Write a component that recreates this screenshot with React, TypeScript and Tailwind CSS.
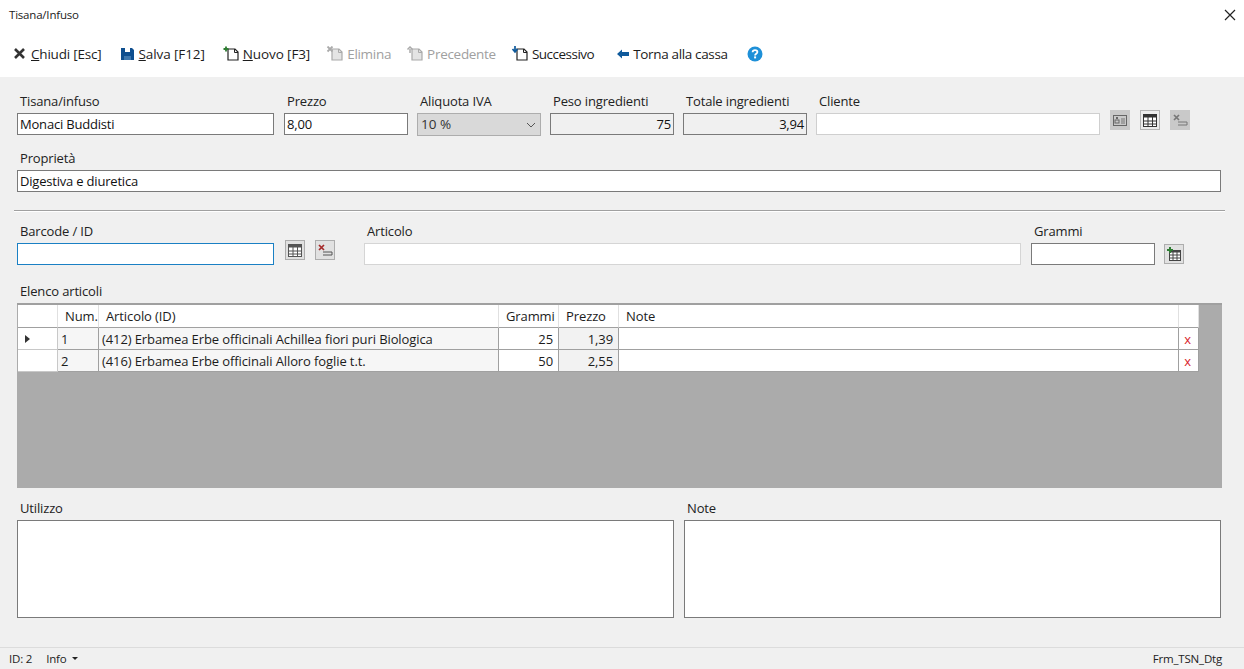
const font = "font-['Open_Sans','Liberation_Sans',sans-serif]"

// toolbar icons
function IconClose() {
  return (
    <svg width="16" height="16" viewBox="0 0 16 16" className="shrink-0">
      <path d="M3 3l9 9M12 3l-9 9" stroke="#333" strokeWidth="2.6" fill="none" />
    </svg>
  )
}

function IconSave() {
  return (
    <svg width="16" height="16" viewBox="0 0 16 16" className="shrink-0">
      <path d="M1 2h11l2 2v10H1z" fill="#0f4f8f" />
      <rect x="5" y="2" width="5" height="4" fill="#fff" />
      <rect x="4" y="10" width="7" height="4" fill="#3f78ae" />
    </svg>
  )
}

function IconDoc({ mark, color, dim }: { mark: "plus" | "up" | "down" | "x"; color: string; dim?: boolean }) {
  return (
    <svg width="18" height="16" viewBox="0 0 18 16" className="shrink-0">
      <path d="M6 3h7l3 3v8H6z" fill={dim ? "#e4e4e4" : "#fff"} stroke={dim ? "#aaa" : "#222"} strokeWidth="1.2" />
      <path d="M12.5 3v3.5H16" fill="none" stroke={dim ? "#aaa" : "#222"} strokeWidth="1" />
      {mark === "plus" && <path d="M4 0.5v5M1.5 3h5" stroke={color} strokeWidth="1.8" />}
      {mark === "x" && <path d="M1.5 0.5l5 5M6.5 0.5l-5 5" stroke={color} strokeWidth="1.8" />}
      {mark === "up" && <path d="M4 7V3M1.5 3.5L4 1l2.5 2.5" stroke={color} strokeWidth="1.5" fill="none" />}
      {mark === "down" && <path d="M4 0v4.5M1.5 3L4 6l2.5-3" stroke={color} strokeWidth="1.7" fill="none" />}
    </svg>
  )
}

function IconBack() {
  return (
    <svg width="14" height="12" viewBox="0 0 14 12" className="shrink-0">
      <path d="M1 6l5-4.500V4h7v4H6v2.500z" fill="#0f5a9c" />
    </svg>
  )
}

function IconHelp() {
  return (
    <svg width="16" height="16" viewBox="0 0 16 16" className="shrink-0 ml-[19px]">
      <circle cx="8" cy="8" r="7.500" fill="#1e90d8" />
      <path d="M5.600 6.200C5.700 4.800 6.700 4.200 8 4.200c1.400 0 2.400.8 2.400 1.900 0 1.700-2.300 1.700-2.300 3.300" fill="none" stroke="#fff" strokeWidth="1.800" />
      <rect x="7.100" y="10.400" width="2" height="2" fill="#fff" />
    </svg>
  )
}

function GridGlyph({ color = "#333" }: { color?: string }) {
  return (
    <svg width="14" height="13" viewBox="0 0 14 13">
      <rect x="0.500" y="0.500" width="13" height="12" fill="#fff" stroke={color} />
      <rect x="0.500" y="0.500" width="13" height="3" fill={color} />
      <path d="M0 7h14M0 10h14M5 3v10M9.500 3v10" stroke={color} strokeWidth="1" />
    </svg>
  )
}

function ClearGlyph({ color, line }: { color: string; line: string }) {
  return (
    <svg width="16" height="14" viewBox="0 0 16 14">
      <path d="M2 2l5 5M7 2l-5 5" stroke={color} strokeWidth="1.700" />
      <path d="M6 9h9v3H6" fill="none" stroke={line} strokeWidth="1" />
    </svg>
  )
}

function CardGlyph() {
  return (
    <svg width="14" height="13" viewBox="0 0 14 13">
      <rect x="0.500" y="1.500" width="13" height="10" fill="none" stroke="#666" />
      <rect x="3" y="3" width="2" height="2" fill="#666" />
      <rect x="2" y="6" width="4" height="3" fill="none" stroke="#666" />
      <path d="M8 5h4M8 7h4M8 9h4" stroke="#777" />
    </svg>
  )
}

function SquareBtn({ children, tone }: { children: React.ReactNode; tone: "dim" | "on" | "plain" }) {
  const cls =
    tone === "dim"
      ? "bg-[#c9c9c9] border-[#c9c9c9]"
      : tone === "on"
        ? "bg-[#ececec] border-[#b5b5b5]"
        : "bg-[#e1e1e1] border-[#adadad]"
  return <div className={`w-5 h-5 shrink-0 border flex items-center justify-center ${cls}`}>{children}</div>
}

function ToolItem({
  icon,
  text,
  dim,
  u,
  track,
  className,
}: {
  icon: React.ReactNode
  text: string
  dim?: boolean
  u?: boolean
  track: string
  className?: string
}) {
  return (
    <div className={`flex items-center gap-[3px] text-[13.500px] ${dim ? "text-[#a0a0a0]" : "text-[#1c1c1c]"} ${className ?? ""}`}>
      {icon}
      <span className={`whitespace-nowrap ${track}`}>
        {u ? (
          <>
            <span className="underline">{text[0]}</span>
            {text.slice(1)}
          </>
        ) : (
          text
        )}
      </span>
    </div>
  )
}

function Field({
  label,
  value,
  width,
  align,
  disabled,
  border,
  className,
}: {
  label: string
  value?: string
  width: string
  align?: "right"
  disabled?: boolean
  border?: string
  className?: string
}) {
  return (
    <div className={`flex flex-col shrink-0 ${width} ${className ?? ""}`}>
      <div className="h-[20px] pl-[3px] text-[13px] text-[#222] whitespace-nowrap tracking-[-0.15px] leading-[16px]">{label}</div>
      <div
        className={`h-[22px] border px-[2px] text-[13px] leading-[21px] tracking-[-0.2px] text-[#111] whitespace-nowrap ${
          border ?? "border-[#7a7a7a]"
        } ${disabled ? "bg-[#f0f0f0]" : "bg-white"} ${align === "right" ? "text-right" : ""}`}
      >
        {value}
      </div>
    </div>
  )
}

const tableCols = "grid grid-cols-[40px_41px_400px_60px_60px_560px_20px] w-fit"

function Row({ n, name, g, p, active }: { n: string; name: string; g: string; p: string; active?: boolean }) {
  const cell = "border-r border-b border-[#a0a0a0] h-[22px] leading-[23px] whitespace-nowrap overflow-hidden"
  return (
    <div className={tableCols}>
      <div className="border-r border-b border-[#c8c8c8] bg-white h-[22px] flex items-center pl-[7px]">
        {active && <div className="w-0 h-0 border-y-[4px] border-y-transparent border-l-[5px] border-l-[#333]" />}
      </div>
      <div className={`${cell} bg-[#f6f6f6] px-[3px]`}>{n}</div>
      <div className={`${cell} bg-[#f6f6f6] px-[3px]`}>{name}</div>
      <div className={`${cell} bg-white text-right pr-[5px]`}>{g}</div>
      <div className={`${cell} bg-[#f2f2f2] text-right pr-[5px]`}>{p}</div>
      <div className={`${cell} bg-white`}></div>
      <div className={`${cell} bg-white text-center pr-[2px] text-[#d8232a]`}>x</div>
    </div>
  )
}

export default function App() {
  return (
    <div className={`w-[1244px] h-[669px] overflow-hidden flex flex-col bg-[#f0f0f0] ${font}`}>
      {/* title + toolbar */}
      <div className="h-[77px] bg-white shrink-0">
        <div className="h-[30px] flex items-center justify-between pl-[9px] pr-[8px] text-[11.500px] tracking-[-0.2px] text-[#222]">
          <span>Tisana/Infuso</span>
          <svg width="12" height="12" viewBox="0 0 12 12">
            <path d="M1 1l10 10M11 1L1 11" stroke="#222" strokeWidth="1.200" />
          </svg>
        </div>
        <div className="h-[47px] flex items-center pl-[12px] pt-[1px]">
          <ToolItem icon={<IconClose />} text="Chiudi [Esc]" u track="tracking-[-0.2px]" />
          <ToolItem icon={<IconSave />} text="Salva [F12]" u track="tracking-[-0.1px]" className="ml-[18px]" />
          <ToolItem icon={<IconDoc mark="plus" color="#2e7d32" />} text="Nuovo [F3]" u track="tracking-[-0.1px]" className="ml-[17px]" />
          <ToolItem icon={<IconDoc mark="x" color="#aaa" dim />} text="Elimina" dim track="tracking-[-0.3px]" className="ml-[16px]" />
          <ToolItem icon={<IconDoc mark="up" color="#aaa" dim />} text="Precedente" dim track="tracking-[-0.3px]" className="ml-[15px]" />
          <ToolItem icon={<IconDoc mark="down" color="#0f5a9c" />} text="Successivo" track="tracking-[-0.5px]" className="ml-[15px]" />
          <ToolItem icon={<IconBack />} text="Torna alla cassa" track="tracking-[-0.35px]" className="ml-[22px]" />
          <IconHelp />
        </div>
      </div>

      {/* form */}
      <div className="flex-1 pl-[17px] pt-[16px] flex flex-col">
        <div className="flex items-start">
          <Field label="Tisana/infuso" value="Monaci Buddisti" width="w-[257px]" />
          <Field label="Prezzo" value="8,00" width="w-[124px]" className="ml-[10px]" />
          <div className="flex flex-col w-[124px] shrink-0 ml-[9px]">
            <div className="h-[20px] pl-[3px] text-[13px] leading-[16px] text-[#222] tracking-[-0.15px]">Aliquota IVA</div>
            <div className="h-[23px] border border-[#adadad] bg-[#d9d9d9] flex items-center justify-between pl-[3px] pr-[3px] text-[13.500px] text-[#333]">
              <span>10 %</span>
              <svg width="12" height="12" viewBox="0 0 12 12">
                <path d="M2 4l4 4 4-4" fill="none" stroke="#555" strokeWidth="1" />
              </svg>
            </div>
          </div>
          <Field label="Peso ingredienti" value="75" width="w-[124px]" align="right" disabled className="ml-[9px]" />
          <Field label="Totale ingredienti" value="3,94" width="w-[124px]" align="right" disabled className="ml-[9px]" />
          <Field label="Cliente" width="w-[284px]" border="border-[#cfcfcf]" className="ml-[9px]" />
          <div className="flex items-center gap-[10px] ml-[10px] mt-[17px]">
            <SquareBtn tone="dim">
              <CardGlyph />
            </SquareBtn>
            <SquareBtn tone="on">
              <GridGlyph />
            </SquareBtn>
            <SquareBtn tone="dim">
              <ClearGlyph color="#777" line="#777" />
            </SquareBtn>
          </div>
        </div>

        <Field label="Proprietà" value="Digestiva e diuretica" width="w-[1204px]" className="mt-[14px]" />

        <div className="w-[1211px] h-[2px] border-t border-t-[#a0a0a0] border-b border-b-white -ml-[3px] mt-[18px]" />

        <div className="flex items-start mt-[11px]">
          <Field label="Barcode / ID" width="w-[257px]" border="border-[#1a80c4]" />
          <div className="flex gap-[10px] ml-[11px] mt-[17px]">
            <SquareBtn tone="plain">
              <GridGlyph color="#555" />
            </SquareBtn>
            <SquareBtn tone="plain">
              <ClearGlyph color="#a52a2a" line="#555" />
            </SquareBtn>
          </div>
          <Field label="Articolo" width="w-[657px]" border="border-[#d5d5d5]" className="ml-[29px]" />
          <Field label="Grammi" width="w-[124px]" className="ml-[10px]" />
          <div className="ml-[9px] mt-[21px]">
            <SquareBtn tone="plain">
              <svg width="16" height="15" viewBox="0 0 16 15">
                <rect x="3.500" y="3.500" width="11" height="10" fill="#fff" stroke="#444" />
                <rect x="3.500" y="3.500" width="11" height="2" fill="#444" />
                <path d="M3 8h12M3 11h12M7 5v9M11 5v9" stroke="#444" />
                <path d="M4 0v6M1 3h6" stroke="#2e7d32" strokeWidth="2" />
              </svg>
            </SquareBtn>
          </div>
        </div>

        <div className="h-[18px] mt-[17px] pl-[3px] text-[13px] leading-[18px] text-[#222] tracking-[-0.15px]">Elenco articoli</div>

        <div className="w-[1205px] h-[185px] mt-[3px] bg-[#ababab] border-t-2 border-t-[#a0a0a0] pl-[1px] text-[13px] tracking-[-0.1px] text-[#1c1c1c]">
          <div className={`${tableCols} bg-white`}>
            {["", "Num.", "Articolo (ID)", "Grammi", "Prezzo", "Note", ""].map((h, i) => (
              <div key={i} className="h-[23px] leading-[22px] pl-[7px] border-r border-r-[#e0e0e0] border-b border-b-[#a0a0a0] whitespace-nowrap">
                {h}
              </div>
            ))}
          </div>
          <Row n="1" name="(412) Erbamea Erbe officinali Achillea fiori puri Biologica" g="25" p="1,39" active />
          <Row n="2" name="(416) Erbamea Erbe officinali Alloro foglie t.t." g="50" p="2,55" />
        </div>

        <div className="flex mt-[11px]">
          <div className="w-[657px] shrink-0">
            <div className="h-[21px] pl-[3px] text-[13px] leading-[18px] text-[#222] tracking-[-0.15px]">Utilizzo</div>
            <div className="h-[98px] border border-[#7a7a7a] bg-white" />
          </div>
          <div className="w-[537px] shrink-0 ml-[10px]">
            <div className="h-[21px] pl-[3px] text-[13px] leading-[18px] text-[#222] tracking-[-0.15px]">Note</div>
            <div className="h-[98px] border border-[#7a7a7a] bg-white" />
          </div>
        </div>
      </div>

      {/* status bar */}
      <div className="h-[22px] shrink-0 border-t border-[#dcdcdc] flex items-center justify-between pl-[9px] pr-[22px] text-[11.500px] tracking-[-0.2px] text-[#222]">
        <div className="flex items-center">
          <span>ID: 2</span>
          <span className="ml-[14px]">Info</span>
          <div className="ml-[6px] w-0 h-0 border-x-[3px] border-x-transparent border-t-[3px] border-t-[#222]" />
        </div>
        <span>Frm_TSN_Dtg</span>
      </div>
    </div>
  )
}
